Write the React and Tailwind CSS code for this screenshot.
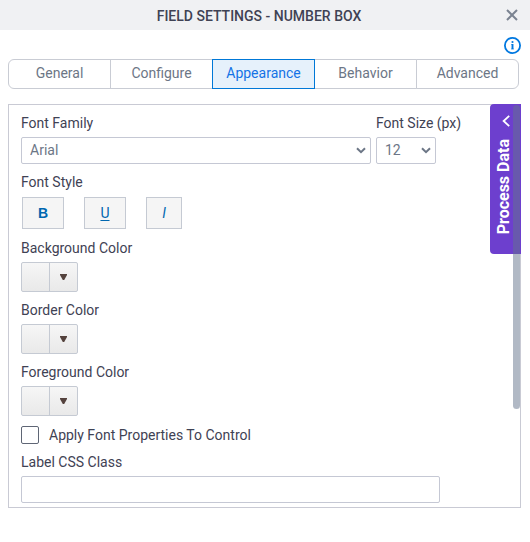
import {useState} from 'react';

const tabs = ['General', 'Configure', 'Appearance', 'Behavior', 'Advanced'];

const Header = () => (
    <header className="flex h-[30px] items-center bg-[#f0f1f3] px-3">
        <h1 className="flex-1 pt-[2px] text-center text-sm font-medium text-[#3f4254]">
            FIELD SETTINGS - NUMBER BOX
        </h1>
        <button type="button" aria-label="Close" className="text-[#7b8391]">
            <svg className="block size-3" viewBox="0 0 12 12" fill="none" stroke="currentColor" strokeWidth="2">
                <path d="M1 1l10 10M11 1L1 11" />
            </svg>
        </button>
    </header>
);

const InfoButton = () => (
    <button type="button" aria-label="Help" className="block text-[#0078e0]">
        <svg className="block size-[17px]" viewBox="0 0 17 17" fill="none">
            <circle cx="8.5" cy="8.5" r="7.6" stroke="currentColor" strokeWidth="1.8" />
            <path d="M7.4 7.5h1.2M7.2 12h2.6" stroke="currentColor" strokeWidth="0.8" />
            <path d="M8.5 7v5" stroke="currentColor" strokeWidth="1.9" />
            <circle cx="8.5" cy="5" r="1.1" fill="currentColor" />
        </svg>
    </button>
);

const Tab = ({label, active, onSelect}) => (
    <button
        type="button"
        role="tab"
        aria-selected={active}
        onClick={onSelect}
        className={
            active
                ? 'relative -ml-px h-[30px] flex-1 border border-[#0078d7] bg-[#e6f1fb] pb-[2px] text-[#1473e6]'
                : '-ml-px h-[30px] flex-1 border border-[#c9ccd4] bg-white pb-[2px] text-[#6c7686] first:ml-0 first:rounded-l-md last:rounded-r-md'
        }
    >
        {label}
    </button>
);

const Select = ({id, value, className}) => (
    <div className={`relative mt-1 text-[#6c7686] ${className}`}>
        <select
            id={id}
            defaultValue={value}
            className="block h-[27px] w-full appearance-none rounded-xs border border-[#c5c8d4] bg-white px-2 pb-px"
        >
            <option>{value}</option>
        </select>
        <svg
            className="pointer-events-none absolute top-[10px] right-[5px] h-[7px] w-[10px]"
            viewBox="0 0 10 7"
            fill="none"
            stroke="currentColor"
            strokeWidth="2"
        >
            <path d="M1 1.2l4 4 4-4" />
        </svg>
    </div>
);

const StyleButton = ({label, className, children}) => (
    <button
        type="button"
        aria-label={label}
        className={`h-8 border border-[#c5cad3] bg-[#f5f5f5] text-[#0067b0] ${className}`}
    >
        {children}
    </button>
);

const ColorPicker = ({id, label}) => (
    <div className="mt-2">
        <label htmlFor={id} className="block">{label}</label>
        <button
            type="button"
            id={id}
            className="mt-1 flex h-[30px] w-[57px] rounded-xs border border-[#c5cad3] bg-linear-to-b from-[#f6f6f6] to-[#e9e9e9]"
        >
            <span className="h-full flex-1 border-r border-[#c5cad3]" />
            <span className="flex h-full w-[27px] items-center justify-center">
                <svg className="block h-[6px] w-[7px]" viewBox="0 0 7 6" fill="#54423d">
                    <path d="M0 0h7v1L4.2 6H2.8L0 1z" />
                </svg>
            </span>
        </button>
    </div>
);

const ProcessData = () => (
    <button
        type="button"
        className="absolute -top-px -right-px flex h-[150px] w-[31px] flex-col items-center rounded-l-sm bg-[#6d3fce] pt-[11px] text-white"
    >
        <svg className="block h-3 w-2" viewBox="0 0 8 12" fill="none" stroke="currentColor" strokeWidth="1.8">
            <path d="M7.2 0.8L1.6 6l5.6 5.2" />
        </svg>
        <span className="mt-3 mr-1 rotate-180 text-base leading-5 font-bold whitespace-nowrap [writing-mode:vertical-rl]">
            Process Data
        </span>
    </button>
);

const App = () => {
    const [activeTab, setActiveTab] = useState('Appearance');

    return (
        <div className="bg-white font-[Roboto,sans-serif] text-sm text-[#3f4254]">
            <Header />
            <div className="flex justify-end pt-[7px] pr-[9px]">
                <InfoButton />
            </div>
            <div role="tablist" className="mt-[5px] mr-[11px] ml-2 flex">
                {tabs.map((tab) => (
                    <Tab
                        key={tab}
                        label={tab}
                        active={tab === activeTab}
                        onSelect={() => setActiveTab(tab)}
                    />
                ))}
            </div>
            <main className="relative mt-[15px] mr-[9px] ml-2 border border-[#c9cad4] px-3 pt-2 pb-1">
                <div className="flex gap-[5px]">
                    <div className="flex-1">
                        <label htmlFor="font-family" className="block">Font Family</label>
                        <Select id="font-family" value="Arial" className="w-full" />
                    </div>
                    <div className="w-[132px]">
                        <label htmlFor="font-size" className="block">Font Size (px)</label>
                        <Select id="font-size" value="12" className="w-[60px]" />
                    </div>
                </div>
                <div role="group" aria-labelledby="font-style" className="mt-2 mb-[9px]">
                    <div id="font-style">Font Style</div>
                    <div className="mt-[5px] ml-px flex gap-5">
                        <StyleButton label="Bold" className="w-[42px] font-['Liberation_Sans',sans-serif] font-bold">B</StyleButton>
                        <StyleButton label="Underline" className="w-[42px] underline underline-offset-2">U</StyleButton>
                        <StyleButton label="Italic" className="w-9 italic">I</StyleButton>
                    </div>
                </div>
                <ColorPicker id="background-color" label="Background Color" />
                <ColorPicker id="border-color" label="Border Color" />
                <ColorPicker id="foreground-color" label="Foreground Color" />
                <label className="mt-[10px] flex h-[18px] items-center gap-[10px]">
                    <input
                        type="checkbox"
                        className="size-[18px] appearance-none rounded-xs border border-[#5f6675] bg-white checked:bg-[#0078d7]"
                    />
                    Apply Font Properties To Control
                </label>
                <div className="mt-2 mr-[68px]">
                    <label htmlFor="css-class" className="block">Label CSS Class</label>
                    <input
                        id="css-class"
                        type="text"
                        className="mt-1 block h-[27px] w-full rounded-xs border border-[#c5c8d4] px-2"
                    />
                </div>
                <ProcessData />
                <div className="pointer-events-none absolute top-0 right-0 h-[304px] w-[7px] rounded-full bg-[#64748b]/50" />
            </main>
        </div>
    );
};

export default App;
